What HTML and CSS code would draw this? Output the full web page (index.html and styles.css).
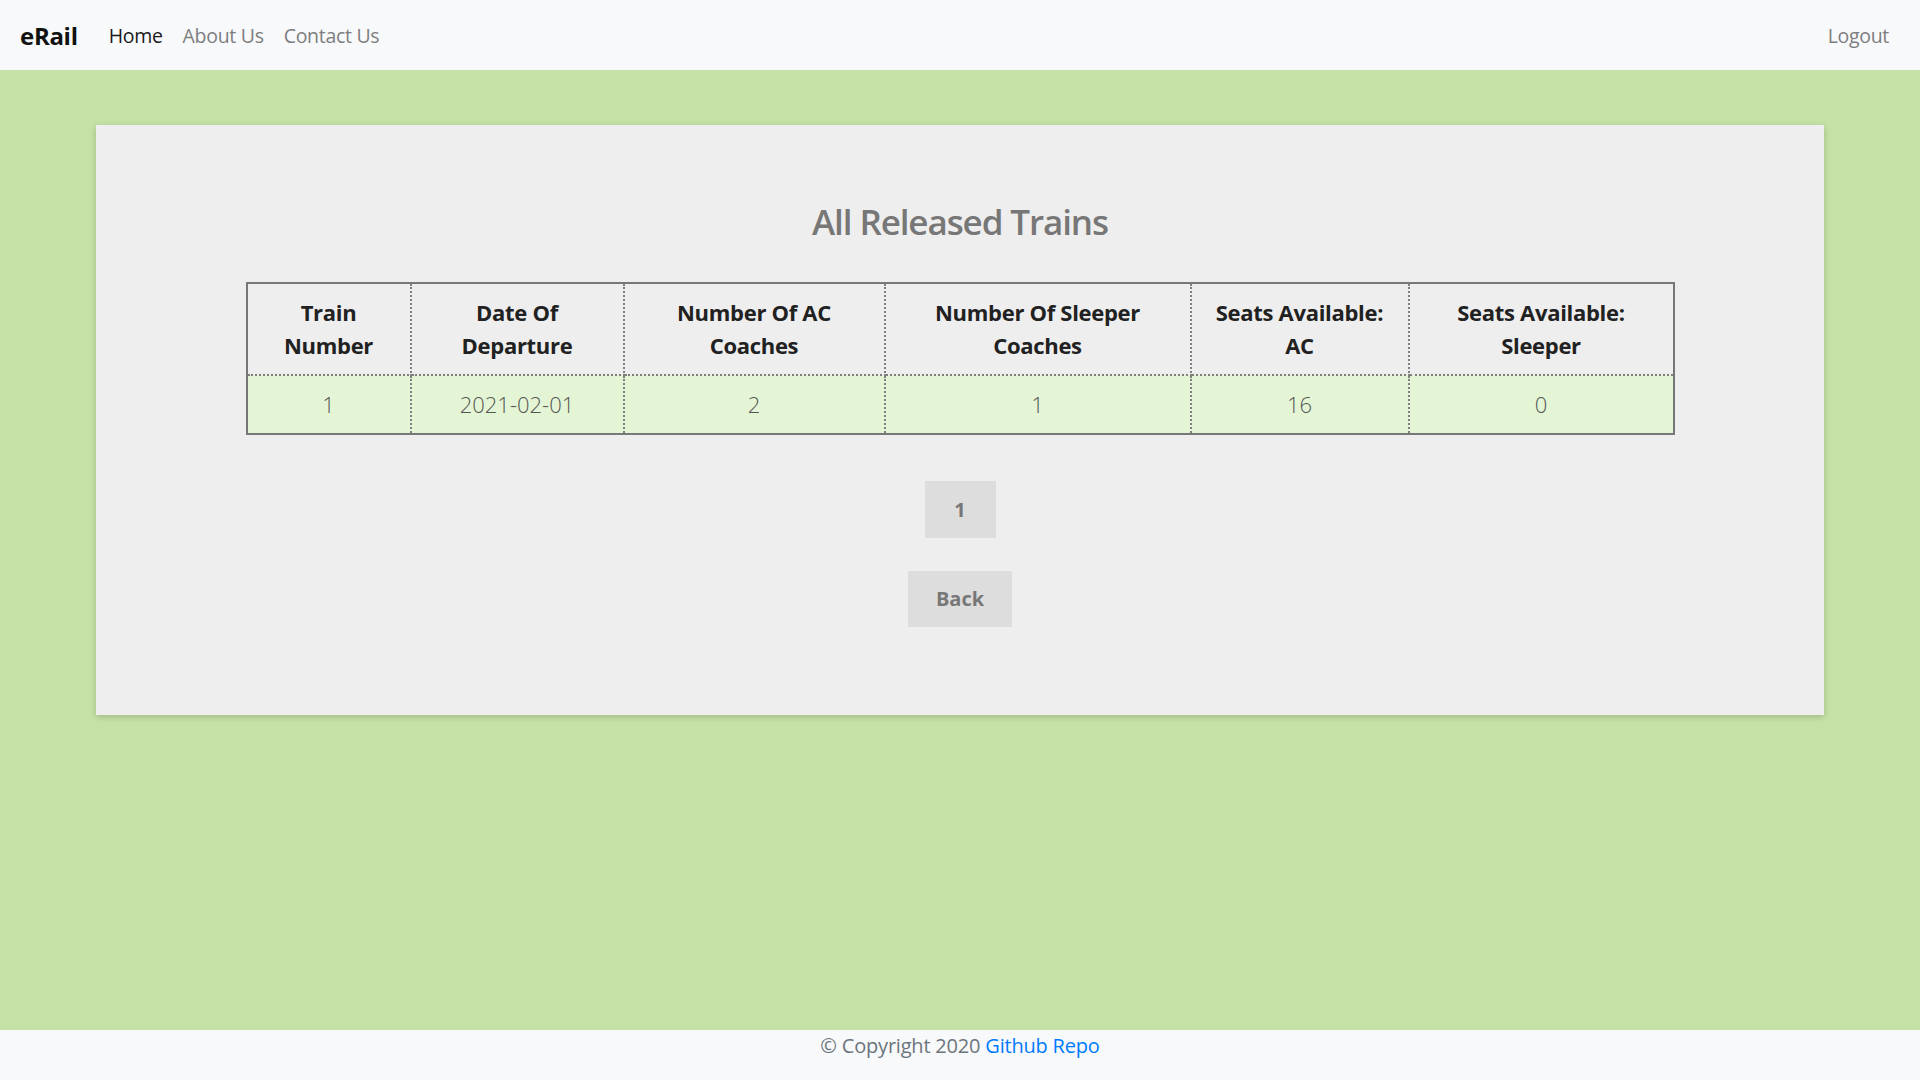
FILE: index.html
```html
<!DOCTYPE html>
<html lang="en">
<head>
<meta charset="utf-8">
<title>eRail - All Released Trains</title>
<link rel="stylesheet" href="styles.css">
</head>
<body>
<div class="page">
  <nav class="navbar">
    <a class="brand" href="#">eRail</a>
    <ul class="nav">
      <li><a class="nav-link active" href="#">Home</a></li>
      <li><a class="nav-link" href="#">About Us</a></li>
      <li><a class="nav-link" href="#">Contact Us</a></li>
    </ul>
    <ul class="nav nav-right">
      <li><a class="nav-link" href="#">Logout</a></li>
    </ul>
  </nav>

  <main class="main">
    <section class="card">
      <h2 class="title">All Released Trains</h2>
      <table class="trains">
        <thead>
          <tr>
            <th class="c1">Train<br>Number</th>
            <th class="c2">Date Of<br>Departure</th>
            <th class="c3">Number Of AC<br>Coaches</th>
            <th class="c4">Number Of Sleeper<br>Coaches</th>
            <th class="c5">Seats Available:<br>AC</th>
            <th class="c6">Seats Available:<br>Sleeper</th>
          </tr>
        </thead>
        <tbody>
          <tr>
            <td>1</td>
            <td>2021-02-01</td>
            <td>2</td>
            <td>1</td>
            <td>16</td>
            <td>0</td>
          </tr>
        </tbody>
      </table>
      <div class="pagination">
        <button class="btn page-btn">1</button>
      </div>
      <div class="actions">
        <button class="btn back-btn">Back</button>
      </div>
    </section>
  </main>

  <footer class="footer">
    © Copyright 2020 <a href="#" class="footer-link">Github Repo</a>
  </footer>
</div>
</body>
</html>
```

FILE: styles.css
```css
* { box-sizing: border-box; }

html, body {
  margin: 0;
  padding: 0;
}

body {
  font-family: "Segoe UI", "Open Sans", "Noto Sans", sans-serif;
  font-size: 20px;
  line-height: 1.5;
  color: #212529;
  background: #c5e1a5;
}

.page {
  min-height: 100vh;
  display: flex;
  flex-direction: column;
}

.navbar {
  height: 70px;
  flex: 0 0 70px;
  background: #f8f9fa;
  display: flex;
  align-items: center;
  padding: 2px 20px 0;
}

.brand {
  font-size: 24px;
  font-weight: 700;
  color: #111;
  text-decoration: none;
  margin-right: 21px;
  line-height: 1;
  letter-spacing: -0.3px;
}

.nav {
  list-style: none;
  margin: 0;
  padding: 0;
  display: flex;
}

.nav-right {
  margin-left: auto;
}

.nav-link {
  display: block;
  padding: 0 10px;
  font-size: 19.5px;
  letter-spacing: -0.3px;
  color: #7d7e7f;
  text-decoration: none;
}

.nav-right .nav-link {
  padding-right: 11px;
}

.nav-link.active {
  color: #1a1a1a;
}

.main {
  flex: 1;
}

.card {
  width: 90%;
  margin: 55px auto 0;
  background: #eeeeee;
  box-shadow: 0 2px 6px rgba(0, 0, 0, 0.18);
  padding: 76px 0 88px;
  display: flex;
  flex-direction: column;
  align-items: center;
}

.title {
  margin: 0 0 39px;
  font-size: 35px;
  font-weight: 600;
  letter-spacing: -1.1px;
  line-height: 1.2;
  color: #777;
}

.trains {
  border-collapse: collapse;
  table-layout: fixed;
  width: 1427px;
  border: 2px solid #777;
  font-size: 22px;
  line-height: 33px;
}

.trains th,
.trains td {
  border: 2px dotted #7f7f7f;
  text-align: center;
  padding: 12px 8px;
}

.trains th {
  font-weight: 700;
  color: #212121;
  letter-spacing: -0.3px;
}

.trains td {
  font-weight: 300;
  color: #555;
  background: #e3f5d4;
}

.trains .c1 { width: 164px; }
.trains .c2 { width: 213px; }
.trains .c3 { width: 261px; }
.trains .c4 { width: 306px; }
.trains .c5 { width: 218px; }
.trains .c6 { width: 265px; }

.pagination {
  margin-top: 46px;
}

.actions {
  margin-top: 33px;
}

.btn {
  font-family: inherit;
  font-size: 20px;
  font-weight: 700;
  line-height: 30px;
  color: #777;
  background: #dddddd;
  border: 0;
  cursor: pointer;
}

.page-btn {
  width: 71px;
  height: 57px;
  padding: 0;
}

.back-btn {
  width: 104px;
  height: 56px;
  padding: 0;
}

.footer {
  flex: 0 0 50px;
  height: 50px;
  background: #f8f9fa;
  text-align: center;
  color: #6c757d;
  padding-top: 1px;
  letter-spacing: -0.2px;
}

.footer-link {
  color: #007bff;
  text-decoration: none;
}
```
